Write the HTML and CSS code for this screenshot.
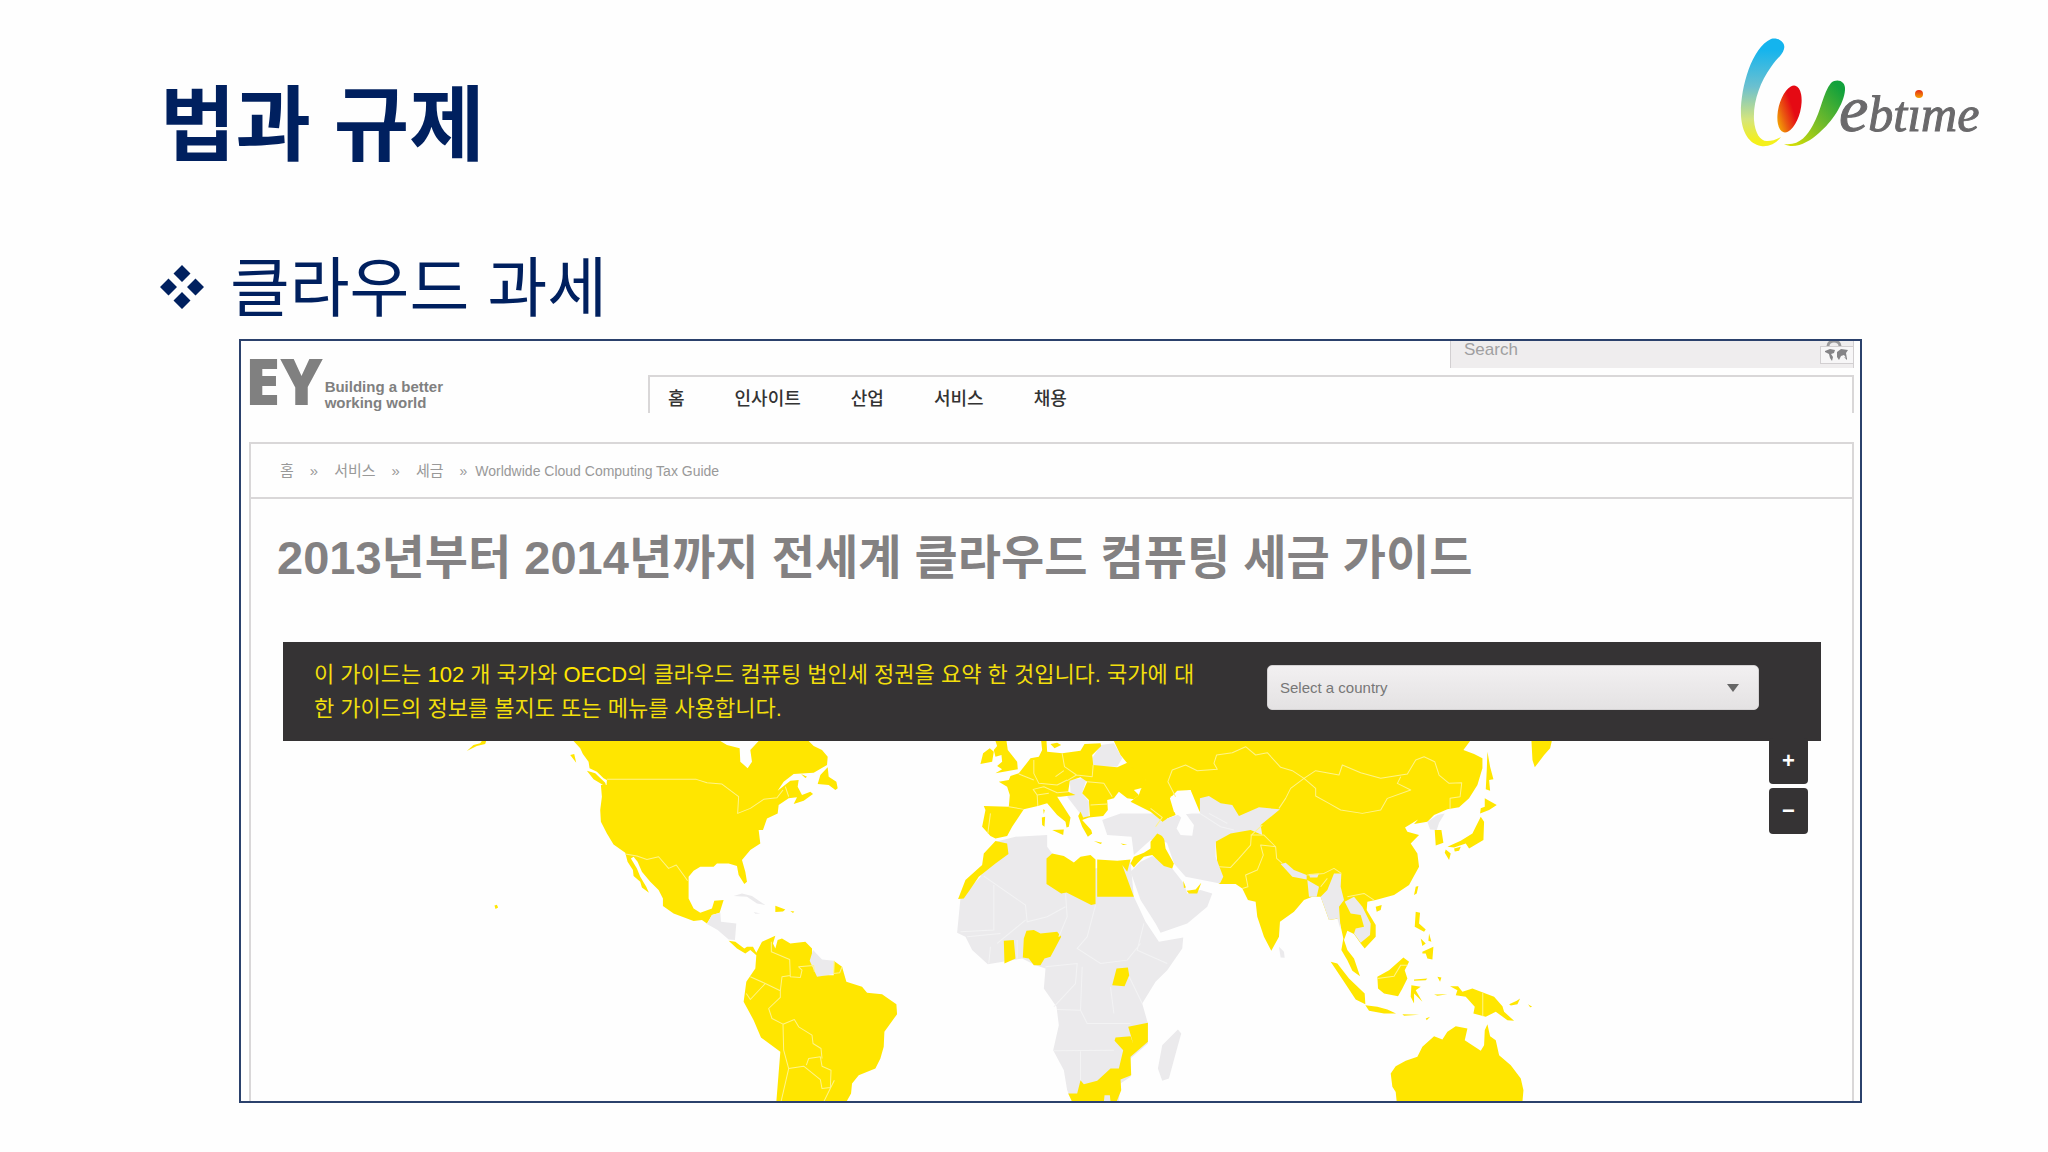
FILE: index.html
```html
<!DOCTYPE html>
<html lang="ko">
<head>
<meta charset="utf-8">
<title>법과 규제</title>
<link rel="stylesheet" href="styles.css">
</head>
<body>
<main class="slide">
  <header class="slide-head">
    <h1 class="slide-title">법과 규제</h1>
    <svg class="webtime" viewBox="0 0 280 140" role="img" aria-label="Webtime">
      <defs>
        <linearGradient id="wa" x1="0" y1="0" x2="0" y2="1"><stop offset="0.1" stop-color="#14b4ee"/><stop offset="0.45" stop-color="#6cc0cf"/><stop offset="0.75" stop-color="#d5e57c"/><stop offset="0.95" stop-color="#f4f01c"/></linearGradient>
        <linearGradient id="wb" x1="0.7" y1="0.3" x2="0.2" y2="1"><stop offset="0.2" stop-color="#e50a14"/><stop offset="0.6" stop-color="#ea5a10"/><stop offset="1" stop-color="#f6b800"/></linearGradient>
        <linearGradient id="wc" x1="1" y1="0" x2="0" y2="1"><stop offset="0.1" stop-color="#12a13c"/><stop offset="0.5" stop-color="#6db92c"/><stop offset="1" stop-color="#e3e400"/></linearGradient>
        <linearGradient id="wd" x1="0" y1="0" x2="0" y2="1"><stop offset="0" stop-color="#e42a18"/><stop offset="1" stop-color="#f5a200"/></linearGradient>
      </defs>
      <path fill="url(#wa)" d="M51 19C58 17 66 22 64 29C62 36 56 39 51 47C40 62 33 82 34 100C35 113 40 121 47 121C52 121 56 120 61 117C56 124 48 127 41 126C29 124 22 112 21 96C20 70 31 28 51 19Z"/>
      <ellipse cx="69.500" cy="89" rx="11" ry="24" transform="rotate(14 69.500 89)" fill="url(#wb)"/>
      <path fill="url(#wc)" d="M111 63C117 58 126 61 125 70C124 84 112 102 99 113C89 122 75 130 64 124C79 126 87 116 93 105C101 91 103 73 111 63Z"/>
      <text class="webtime-text" x="119" y="111"><tspan class="webtime-e">e</tspan><tspan>btıme</tspan></text>
      <circle cx="199" cy="74" r="4" fill="url(#wd)"/>
    </svg>
  </header>

  <h2 class="topic">
    <svg class="bullet" viewBox="0 0 44 44" aria-hidden="true"><path d="M22 0l8.500 8.500L22 17l-8.500-8.500zM8.500 13.500L17 22l-8.500 8.500L0 22zM35.500 13.500L44 22l-8.500 8.500L27 22zM22 27l8.500 8.500L22 44l-8.500-8.500z"/></svg>
    <span>클라우드 과세</span>
  </h2>

  <section class="site">
    <header class="site-head">
      <a class="brand" href="#"><span class="brand-mark">EY</span><span class="brand-line">Building a better<br>working world</span></a>
      <div class="site-tools">
        <form class="search">
          <input class="search-input" type="search" placeholder="Search" aria-label="Search">
          <svg class="search-map" viewBox="0 0 34 24" aria-hidden="true">
            <path d="M8 6a6 5 0 0 1 12 0" fill="none" stroke="#9a999b" stroke-width="3"/>
            <rect x="0.500" y="6.500" width="33" height="17" fill="#f7f6f7" stroke="#d2cfd1"/>
            <path fill="#858487" d="M5 11l5-2 5 1-1 3-3 1 2 3-1 4-2-3-1-4-4-2zM17 12l4-3 7 1-2 3 1 6-3-4-3 1-2 4-2-3zM24 17l3 1v2z"/>
          </svg>
        </form>
        <nav class="menu">
          <a href="#">홈</a><a href="#">인사이트</a><a href="#">산업</a><a href="#">서비스</a><a href="#">채용</a>
        </nav>
      </div>
    </header>

    <div class="page">
      <nav class="crumbs" aria-label="breadcrumb">
        <a href="#">홈</a><span>»</span><a href="#">서비스</a><span>»</span><a href="#">세금</a><span class="crumb-last"><span>»</span><a href="#">Worldwide Cloud Computing Tax Guide</a></span>
      </nav>
      <h3 class="headline">2013년부터 2014년까지 전세계 클라우드 컴퓨팅 세금 가이드</h3>

      <div class="guide">
        <div class="band">
          <p class="intro">이 가이드는 <b>102</b> 개 국가와 <b>OECD</b>의 클라우드 컴퓨팅 법인세 정권을 요약 한 것입니다. 국가에 대<br>한 가이드의 정보를 볼지도 또는 메뉴를 사용합니다.</p>
          <div class="picker">
            <select class="country" aria-label="Select a country"><option>Select a country</option></select>
            <svg class="arrow" viewBox="0 0 12 8" aria-hidden="true"><path d="M0 0h12L6 8z"/></svg>
          </div>
        </div>
        <div class="zoom">
          <button type="button" class="zoom-in" aria-label="Zoom in">+</button>
          <button type="button" aria-label="Zoom out">−</button>
        </div>
        <svg class="map" viewBox="283 741 1537 360" role="img" aria-label="World map">
          <!-- Americas -->
          <g transform="translate(440 730) scale(.33333)">
            <path class="on" d="M80 63L100 45L120 40L125 33L138 33L135 42L110 48ZM390 75L402 72L408 98ZM440 122L465 130L495 158L499 172L480 160L460 148ZM163 526L170 524L174 532L166 537Z"/>
            <path class="on" d="M400 33L420 55L428 72L445 95L448 115L470 125L490 145L500 150L499 165L482 165L485 200L480 240L482 275L500 310L520 343L555 368L562 395L578 420L580 438L600 455L605 472L626 488L618 470L600 440L590 415L572 385L580 380L592 395L605 425L630 455L655 480L668 505L668 528L700 550L760 573L785 570L800 580L815 555L838 548L850 510L822 512L815 535L780 548L760 535L745 505L745 440L760 422L780 410L820 410L830 400L865 400L890 408L895 435L912 462L920 455L915 425L905 390L930 360L960 340L955 300L968 300L980 265L1012 250L1015 225L1045 205L1070 202L1060 222L1090 212L1118 192L1110 185L1085 195L1072 170L1075 150L1050 152L1012 182L1030 155L1060 132L1120 128L1160 105L1162 80L1145 60L1120 48L1105 33L955 33L930 60L935 95L922 115L900 95L898 55L860 45L840 33Z"/>
            <path class="on" d="M1162 112L1140 135L1132 162L1165 165L1185 180L1192 175L1188 155L1165 140ZM1082 132L1100 140L1095 144ZM1005 527L1035 538L1028 544L1005 546ZM1050 543L1062 544L1058 549Z"/>
            <path class="off" d="M815 555L840 548L842 575L888 580L884 630L865 628L832 600L800 582ZM880 498L905 490L935 498L975 525L950 520L920 500ZM940 546L960 550L945 551Z"/>
            <path class="on" d="M865 632L885 635L912 655L920 650L938 650L948 668L965 635L1005 617L998 640L1005 655L1012 630L1025 625L1050 640L1095 635L1115 655L1115 680L1130 735L1180 735L1180 692L1205 710L1218 755L1265 770L1280 788L1325 792L1368 822L1370 852L1332 905L1330 950L1320 985L1305 1015L1255 1035L1235 1060L1232 1090L1218 1115L1008 1115L1020 965L962 922L940 870L910 815L918 755L945 715L948 675L930 660L915 670L890 655Z"/>
            <path class="off" d="M1118 660L1145 688L1180 692L1178 732L1130 740L1108 692Z"/>
            <path class="line" d="M500 148H768L800 158L845 162L895 200L892 250L930 235L970 208L1010 203L1028 180M1035 170L1045 200M555 372L590 378L620 388L655 380L685 415L708 405L742 452M993 635V665L1048 688L1050 740L1080 742L1085 720L1075 710L1120 706L1122 725M930 740L975 760L1020 782V802L985 835L995 865L1028 882L1062 868L1075 890L1115 915L1118 940L1142 955L1145 985M975 760L930 808L918 790M1020 782L1025 740L1050 736M1028 882L1030 960L1045 1015L1022 1115M1045 1015L1090 1008L1140 1048L1145 1075L1170 1072L1172 1020L1145 1008L1140 980L1105 985L1098 1005M1182 1050L1150 1115M1182 692L1180 730L1198 728L1205 710"/>
          </g>
          <!-- Europe and Africa -->
          <g transform="translate(900 730) scale(.33333)">
            <path class="off" d="M285 335L345 320L440 315L440 350L455 370L440 400L560 420L690 395L700 500L735 575L775 635L848 622L845 655L800 720L765 755L725 820L742 880L742 940L690 985L690 1040L660 1060L655 1115L515 1115L500 1080L490 1020L458 960L475 885L468 830L430 775L435 715L405 705L365 685L262 702L215 660L195 620L170 608L180 505L240 440Z"/>
            <path class="off" d="M832 898L842 910L828 960L805 1045L785 1052L772 1015L785 945ZM690 425L720 395L755 378L815 415L850 460L860 490L900 480L935 490L920 530L860 580L780 608L765 580L720 510ZM605 270L660 250L760 250L800 270L820 340L750 330L700 375L693 320L620 315ZM575 85L600 45L640 40L665 85L650 110L575 108ZM508 150L560 142L545 190L565 215L565 262L548 262L500 200L510 190Z"/>
            <path class="on" d="M285 333L320 340L324 372L285 400L235 440L208 480L190 505L173 507L195 450L245 405L250 370ZM438 385L455 370L490 378L520 397L540 380L570 375L585 388V522L572 525L498 487L482 490L438 462ZM590 388L650 392L690 388L680 425L665 405L700 500H590ZM310 632L340 630L345 685L312 700ZM378 602L400 600L420 610L470 605L482 620L450 680L432 685L420 705L400 705L385 685L367 682L370 625ZM648 715L682 712L686 735L672 768L635 765ZM683 890L742 878V935L690 980L692 1035L660 1048L662 1080L648 1115H630L628 1095L612 1095L610 1115H515L503 1090L530 1090L540 1050L550 1062L590 1052L630 1015L655 1015L668 960L642 932L645 922L690 918L698 940Z"/>
            <path class="on" d="M750 335L770 310L790 320L795 355L820 400L815 415L790 408L755 375L730 380L710 400L700 412L690 400L700 380L730 368L750 355ZM848 452L856 472L850 474ZM858 482L885 478L902 458L890 490L865 490ZM240 102L248 70L268 55L280 65L275 95ZM285 130L305 118L290 108L305 95L303 75L285 80L280 60L290 48L285 33H318L322 60L350 95L352 118Z"/>
            <path class="on" d="M295 155L325 150L330 138L355 130L390 85L415 80L425 60L422 33H438L440 65L485 70L540 62L552 42L600 40L602 48L575 75L578 105L650 112L680 98L735 140L738 170L700 180L715 195L700 208L680 205L655 185L640 205L620 210L622 240L608 258L565 262L545 270L572 300L575 310L562 320L545 290L533 258L540 245L548 262L568 258L565 210L545 190L560 155L540 142L508 152L503 185L525 195L480 200L470 200L510 262L505 290L498 292L495 275L470 255L440 220L412 228L370 238L335 290L320 318L285 325L270 318L245 290L255 240L250 228L325 230L328 195L320 170ZM455 300L490 298L488 315ZM424 262L434 260L432 290L425 285ZM428 238L433 240L430 252ZM450 42L470 38L482 45L462 55ZM580 333L605 338L600 342ZM660 340L680 343L668 345Z"/>
            <path class="line" d="M485 70L492 110L528 135L575 140L578 105M400 90V130L415 160L470 165L500 150M465 140L490 122M355 132L400 150M410 195L398 178L430 170L470 188L503 185M412 228L410 195L445 190M325 230L370 238M270 250L262 310M500 152L528 135M560 155L610 160L635 200M570 225L620 222"/>
            <path class="faint" d="M250 438L375 525L380 575L440 560L495 530M280 465V600L180 605M375 570L290 640M495 490L500 560L475 620M585 525L560 620L530 655L600 700L680 690L720 640M435 710L530 700L525 760L460 830M545 710L540 840L470 838M540 840L560 880L690 880M460 962L640 960M540 960V1050M630 770L640 850M686 740L725 820M730 580L710 660L800 700M200 620L300 610M265 700L270 650M350 685V630"/>
          </g>
          <!-- Asia and Oceania -->
          <g transform="translate(1160 730) scale(.33333)">
            <path class="on" d="M-140 33H928L908 60L940 72L965 85L965 115L950 165L925 205L895 232L860 238L820 255L800 275L760 282L772 268L733 292L740 305L775 315L750 340L770 370L775 410L745 465L700 495L645 510L620 515L618 540L645 585L645 620L612 655L600 640L580 612L560 602L550 630L560 660L580 685L598 738L575 722L560 690L542 660L548 625L535 565L505 570L480 500L455 500L430 510L400 545L358 575L355 620L332 662L310 620L290 560L285 515L262 510L245 475L225 462H175L165 335L115 240L90 180L30 200L45 255L20 265L22 290L0 270L-30 245L-90 215L-65 195L-60 180L-45 150L-100 100L-120 75Z"/>
            <path class="off" d="M165 335L210 310L270 300L305 315L300 285L358 238L295 232L235 258L215 225L180 220L145 198L118 205V250L95 250L50 255L20 265L-15 290L20 340L40 400L75 440L125 450L178 460L188 440L165 380Z"/>
            <path class="off" d="M360 402L375 398L400 420L438 435V448L395 440ZM445 432L475 430L470 442L448 442ZM440 450L475 470L468 500L445 500ZM480 500L500 480L520 430L542 430L540 470L550 510L535 530L540 600L530 565L505 570ZM552 515L580 500L605 530L630 580L628 615L600 638L580 610L585 595L610 590L600 555L570 550ZM800 275L830 255L852 250L835 278L828 300L808 298ZM355 650L370 665L372 683L360 682Z"/>
            <path class="sea" d="M90 180L50 182L28 205L40 245L62 262L48 295L60 315L95 317L100 285L75 250L65 215L90 200Z"/>
            <path class="on" d="M1112 33H1173L1168 55L1150 75L1122 112L1115 90ZM980 65L988 110L998 148L985 150L988 182L975 178L978 120ZM972 205L1008 225L985 240L958 250L960 235L972 230ZM960 260L970 275L968 330L925 355L915 340L880 352L860 350L900 332L935 310L945 290ZM855 358L870 370L865 390L852 368ZM880 355L900 350L895 362L882 364ZM822 300L842 300L848 338L825 346ZM765 470L773 468L768 490L760 495ZM645 530L663 525L660 540L648 545ZM765 545L778 548L775 580L795 598L790 605L762 590ZM805 610L812 635L803 632ZM780 625L795 640L785 648ZM785 665L818 650L815 688L800 685L795 670L785 670ZM510 695L530 700L565 745L612 790L614 822L585 808L550 755ZM614 825L650 830L680 838L706 850L670 850L625 842ZM650 740L685 720L728 682L745 695L732 720L740 745L725 775L712 798L670 790L652 775ZM752 765L780 770L765 780L785 815L770 800L760 790V820L750 800ZM760 748L800 745L795 750L760 752ZM830 740L842 742L838 755ZM725 852L775 854L730 857ZM795 865L808 860L798 870ZM820 793L860 792L830 797ZM868 768L892 768L905 785L935 775L1000 800L1025 828L1030 845L1060 872L1040 870L1005 845L975 860L938 850L942 830L915 800L885 795L890 780ZM1045 822L1068 812L1078 805L1070 822L1050 826ZM1102 822L1114 830L1108 831Z"/>
            <path class="on" d="M708 1115L705 1085L695 1070L690 1030L705 1008L735 992L770 980L785 950L820 918L845 928L860 905L885 888L920 895L912 930L960 962L970 945L972 900L980 882L988 918L1005 930L1015 975L1050 1005L1080 1045L1088 1080L1085 1115Z"/>
            <path class="line" d="M-15 290L5 262L-30 235M45 200L22 155L35 120L75 105L110 122L170 118L160 100L168 75L215 68L255 50L285 75L320 68L360 112L395 122L430 145L465 122L535 135L545 105L600 128L660 145L740 132L765 90L790 80L822 95L835 135L865 160L903 158L898 200L868 205L868 238M430 145L465 175V198L505 220L540 240L605 250L660 240L680 205L750 180L710 160L720 140M430 145L390 175L375 205L355 235M305 285L272 315L270 345L235 385L210 412L175 410M270 315L310 315L345 350L348 385L365 400M345 350L300 345L308 375L290 420L255 435L262 470L245 475M440 435L490 430L520 415L542 430M560 500L610 490L640 510M650 745L700 738L720 705L740 705M966 788V858M480 470L500 445"/>
            <path class="faint" d="M118 250L180 290L220 300M145 250L200 280"/>
          </g>
        </svg>
      </div>
    </div>
  </section>
</main>
</body>
</html>
```
FILE: styles.css
```css
* { box-sizing: border-box; }

body {
  margin: 0;
  background: #fefefe;
  font-family: "Liberation Sans", "Noto Sans CJK KR", sans-serif;
}

a { color: inherit; text-decoration: none; }

.slide { padding: 20px 48px 48px 160px; }

.slide-head {
  display: flex;
  justify-content: space-between;
  align-items: flex-start;
}

.slide-title {
  margin: 49px 0 0;
  font: 700 82px/100px "Noto Sans CJK KR", sans-serif;
  color: #00205f;
}

.webtime { width: 280px; height: 140px; }
.webtime-text { font: italic 50px "Liberation Serif", serif; fill: #6a696b; stroke: #6a696b; stroke-width: 1px; }
.webtime-e { font-size: 66px; }

.topic {
  display: flex;
  align-items: center;
  gap: 26px;
  margin: 68px 0 0;
  font: 400 65px/92px "Noto Sans CJK KR", sans-serif;
  color: #00205f;
}

.bullet { width: 44px; height: 44px; margin-top: 8px; fill: #00205f; }

.site {
  margin: 10px 138px 0 79px;
  padding: 0 6px 0 8px;
  border: 2px solid #2b416c;
}

.site-head {
  display: grid;
  grid-template-columns: 399px 1fr;
}

.brand {
  display: flex;
  align-items: flex-end;
  gap: 2px;
  height: 70px;
  margin-left: -4px;
  color: #808080;
}

.brand-mark { font: 800 64px/60px "Open Sans", sans-serif; }
.brand-line { font: 700 15px/16px "Liberation Sans", sans-serif; }

.search {
  position: relative;
  width: 404px;
  height: 27px;
  margin: 0 0 7px auto;
  overflow: hidden;
}

.search-input {
  width: 100%;
  height: 40px;
  margin-top: -13px;
  padding: 0 13px;
  border: 1px solid #d2cfd1;
  border-radius: 2px;
  background: #efedee;
  font: 17px "Liberation Sans", sans-serif;
}

.search-input::placeholder { color: #a09fa1; }
.search-map { position: absolute; right: 0; top: -1px; width: 34px; height: 24px; }

.menu {
  display: flex;
  gap: 50px;
  height: 38px;
  padding: 0 18px;
  border: solid #d9d7d8;
  border-width: 2px 2px 0;
  font: 500 18px/40px "Noto Sans CJK KR", sans-serif;
  color: #333;
}

.page {
  margin-top: 29px;
  border: solid #d9d7d8;
  border-width: 2px 2px 0;
}

.crumbs {
  display: flex;
  align-items: center;
  gap: 16px;
  height: 55px;
  padding-left: 29px;
  border-bottom: 2px solid #d9d7d8;
  font-size: 15px;
  line-height: 20px;
  color: #999;
}

.crumb-last { display: flex; gap: 8px; font-size: 14px; }

.headline {
  margin: 21px 0 0 26px;
  font-size: 47px;
  line-height: 76px;
  color: #838182;
}

.guide {
  position: relative;
  margin: 46px 31px 0 32px;
}

.band {
  display: flex;
  align-items: flex-start;
  justify-content: space-between;
  height: 99px;
  padding: 16px 62px 0 31px;
  background: #353334;
}

.intro { margin: 0; font-size: 22px; line-height: 34px; color: #f2df0c; }
.intro b { font-weight: 400; color: #ffe600; }

.picker { position: relative; width: 492px; margin-top: 7px; }

.country {
  display: block;
  width: 100%;
  height: 45px;
  padding: 0 12px;
  border: 1px solid #d4d2d3;
  border-radius: 5px;
  background: linear-gradient(#f2f0f1, #e4e2e3);
  font: 15px "Liberation Sans", sans-serif;
  color: #777;
  appearance: none;
}

.arrow { position: absolute; right: 20px; top: 19px; width: 12px; height: 8px; fill: #666; pointer-events: none; }

.zoom {
  position: absolute;
  top: 96px;
  right: 13px;
  display: grid;
  gap: 4px;
}

.zoom button {
  width: 39px;
  height: 46px;
  padding: 0;
  border: 0;
  border-radius: 4px;
  background: #353334;
  font: 700 22px/42px "Liberation Sans", sans-serif;
  color: #fff;
}

.map { display: block; width: 100%; height: auto; }
.on { fill: #ffe600; }
.off { fill: #ebeaec; }
.sea { fill: #fefefe; }
.line { fill: none; stroke: #fff48a; stroke-width: 3px; stroke-linejoin: round; }
.faint { fill: none; stroke: #f3f3f4; stroke-width: 3px; }
```
